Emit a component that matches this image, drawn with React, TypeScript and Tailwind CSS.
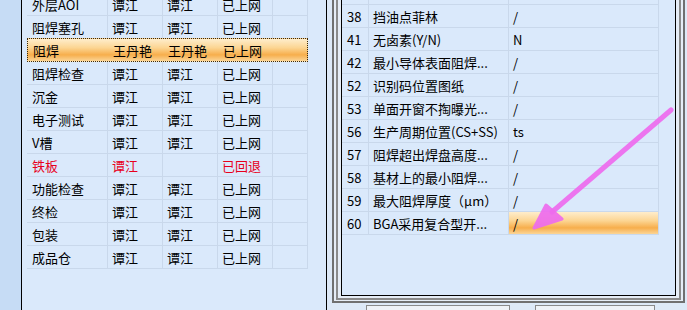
import React from "react";

const font = { fontFamily: '"Noto Sans CJK SC", "Liberation Sans", sans-serif' };

type LeftRow = { c: string[]; sel?: boolean; red?: boolean };

const leftRows: LeftRow[] = [
  { c: ["外层AOI", "谭江", "谭江", "已上网"] },
  { c: ["阻焊塞孔", "谭江", "谭江", "已上网"] },
  { c: ["阻焊", "王丹艳", "王丹艳", "已上网"], sel: true },
  { c: ["阻焊检查", "谭江", "谭江", "已上网"] },
  { c: ["沉金", "谭江", "谭江", "已上网"] },
  { c: ["电子测试", "谭江", "谭江", "已上网"] },
  { c: ["V槽", "谭江", "谭江", "已上网"] },
  { c: ["铁板", "谭江", "", "已回退"], red: true },
  { c: ["功能检查", "谭江", "谭江", "已上网"] },
  { c: ["终检", "谭江", "谭江", "已上网"] },
  { c: ["包装", "谭江", "谭江", "已上网"] },
  { c: ["成品仓", "谭江", "谭江", "已上网"] },
];

const rightRows: string[][] = [
  ["", "", ""],
  ["38", "挡油点菲林", "/"],
  ["41", "无卤素(Y/N)", "N"],
  ["42", "最小导体表面阻焊...", "/"],
  ["52", "识别码位置图纸", "/"],
  ["53", "单面开窗不掏曝光...", "/"],
  ["56", "生产周期位置(CS+SS)", "ts"],
  ["57", "阻焊超出焊盘高度...", "/"],
  ["58", "基材上的最小阻焊...", "/"],
  ["59", "最大阻焊厚度（μm）", "/"],
  ["60", "BGA采用复合型开...", "/"],
];

const orange =
  "bg-[linear-gradient(to_bottom,#feedcc_0%,#fcd592_40%,#f7ae4c_72%,#fbd596_100%)]";

function LeftGridRow({ row }: { row: LeftRow }) {
  const widths = ["w-[81px] pl-[5px]", "w-[55px] pl-[4px]", "w-[55px] pl-[4px]", "w-[55px] pl-[4px]", "w-[35px]"];
  const cells = [...row.c, ""];
  if (row.sel) {
    return (
      <div className={`-mt-px flex h-[24px] w-[281px] items-center border border-dotted border-[#3a2a10] ${orange}`}>
        {cells.map((t, i) => (
          <div key={i} className={`flex-none ${widths[i]} ${i === 0 ? "pl-[4px]" : ""} whitespace-nowrap`}>
            {t}
          </div>
        ))}
      </div>
    );
  }
  return (
    <div className="flex h-[23px] w-[281px] border-b border-[#c9d8eb]">
      {cells.map((t, i) => (
        <div
          key={i}
          className={`flex flex-none items-center border-r border-[#c9d8eb] ${widths[i]} whitespace-nowrap ${
            row.red ? "text-[#e8001c]" : "text-black"
          }`}
        >
          {t}
        </div>
      ))}
    </div>
  );
}

function RightGridRow({ row, last }: { row: string[]; last: boolean }) {
  return (
    <div className="flex h-[23px] w-[317px] border-b border-[#c9d8eb]">
      <div className="flex w-[27px] flex-none items-center border-r border-[#c9d8eb] pl-[5px]">{row[0]}</div>
      <div className="flex w-[140px] flex-none items-center whitespace-nowrap border-r border-[#c9d8eb] pl-[4px]">
        {row[1]}
      </div>
      <div
        className={`flex w-[150px] flex-none items-center border-r border-[#c9d8eb] pl-[4px] ${last ? orange : ""}`}
      >
        {row[2]}
      </div>
    </div>
  );
}

export default function App() {
  return (
    <div
      className="relative flex h-[310px] w-[687px] overflow-hidden bg-[#c6dcf5] text-[13px] leading-none text-black"
      style={font}
    >
      {/* left strip */}
      <div className="w-[21px] flex-none bg-[#c6dcf5]" />

      {/* left grid */}
      <div className="h-full w-[306px] flex-none border-x border-black bg-[#dae9fb] pl-[5px]">
        <div className="-mt-[7px]">
          {leftRows.map((r, i) => (
            <LeftGridRow key={i} row={r} />
          ))}
        </div>
      </div>

      {/* right area */}
      <div className="flex h-full flex-1 flex-col bg-[#dde9f7] pl-[5px] pr-[2px]">
        <div className="flex flex-none flex-col border-x-2 border-b-2 border-[#707070] bg-[#e6edf6] px-[2px] pb-px">
          <div className="flex h-[300px] flex-col border-x-2 border-b-2 border-[#8a8a8a] bg-[#e6edf6] px-[3px] pb-[2px]">
            <div className="flex-1 overflow-hidden border-x border-b border-black bg-[#dae9fb]">
              <div className="-mt-[18px]">
                {rightRows.map((r, i) => (
                  <RightGridRow key={i} row={r} last={i === rightRows.length - 1} />
                ))}
              </div>
            </div>
          </div>
        </div>
        <div className="flex flex-1 gap-[25px] bg-[#dde9f7] pl-[34px] pt-[2px]">
          <div className="w-[144px] border-x border-t border-[#8a8a8a] bg-[#eef2f7]" />
          <div className="w-[120px] border-x border-t border-[#8a8a8a] bg-[#eef2f7]" />
        </div>
      </div>

      {/* annotation arrow */}
      <svg className="pointer-events-none absolute left-0 top-0" width="687" height="310">
        <line x1="671" y1="110" x2="552" y2="212" stroke="#ee6cee" strokeWidth="5" strokeLinecap="round" opacity="0.92" />
        <polygon points="534,228 546,205 562,219" fill="#ee6cee" stroke="#ee6cee" strokeWidth="3" strokeLinejoin="round" opacity="0.92" />
      </svg>
    </div>
  );
}
